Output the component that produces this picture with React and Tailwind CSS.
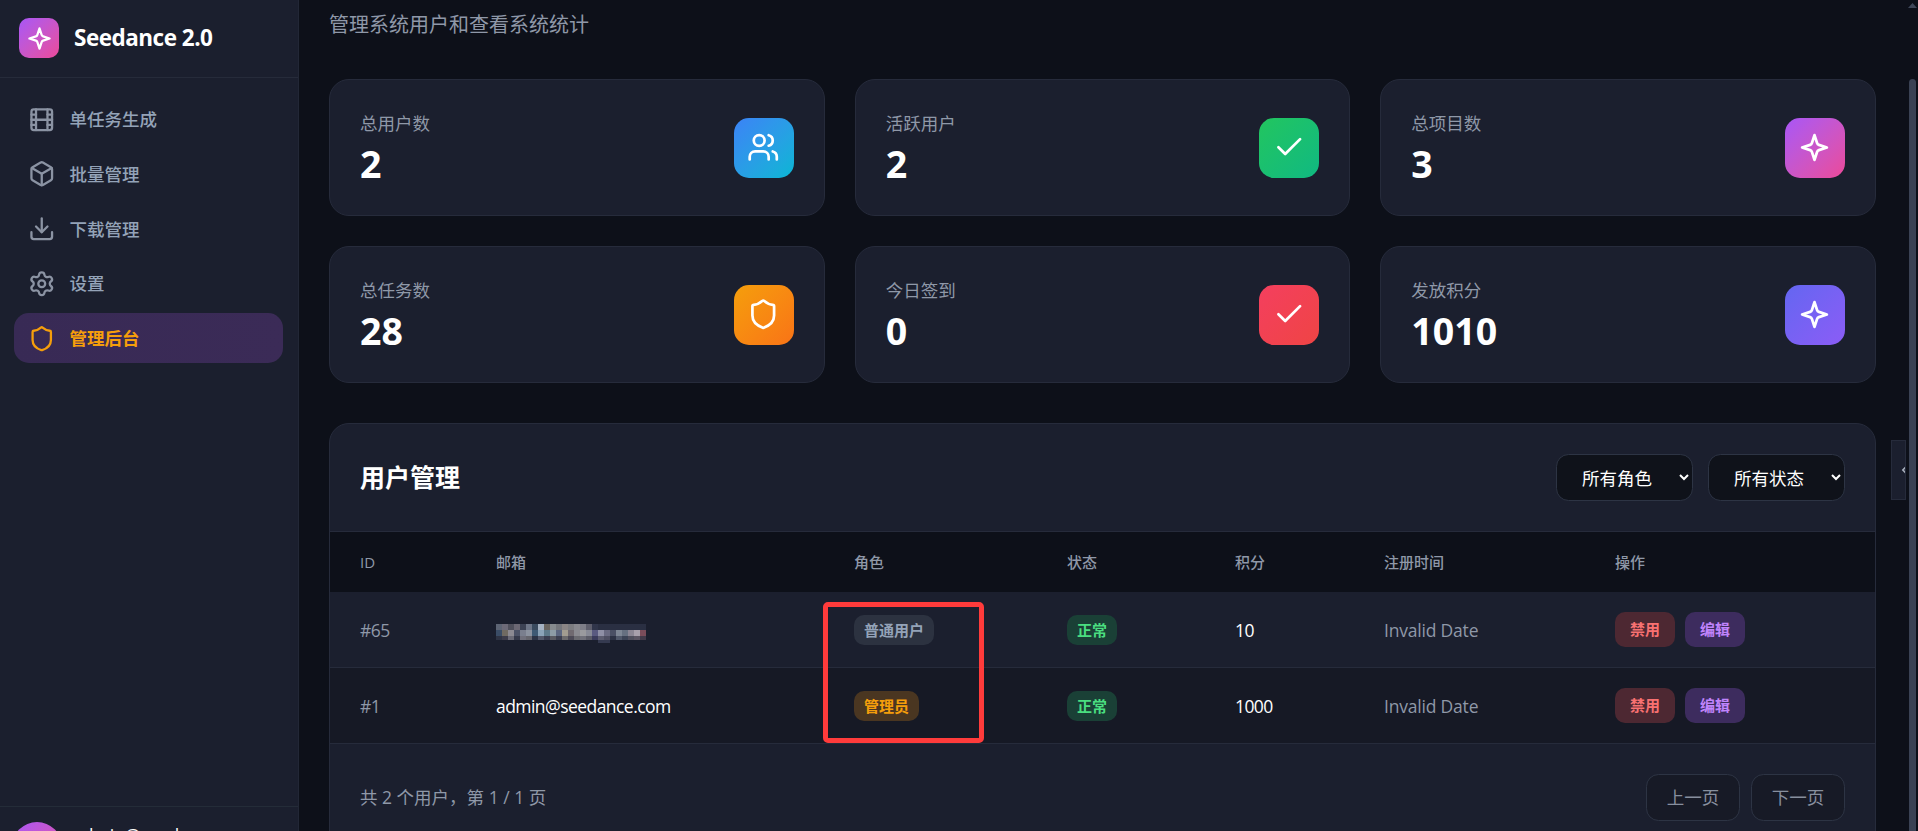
import { Box, Check, Download, Film, Settings, Shield, Users, ChevronLeft } from 'lucide-react';

function Sparkle({ size = 26 }) {
  return (
    <svg width={size} height={size} viewBox="0 0 24 24" fill="none" stroke="currentColor" strokeWidth="2" strokeLinecap="round" strokeLinejoin="round">
      <path d="M12 3l1.9 5.8a2 2 0 0 0 1.3 1.3L21 12l-5.8 1.9a2 2 0 0 0-1.3 1.3L12 21l-1.9-5.8a2 2 0 0 0-1.3-1.3L3 12l5.8-1.9a2 2 0 0 0 1.3-1.3L12 3z" />
    </svg>
  );
}

const navItems = [
  { label: '单任务生成', icon: Film },
  { label: '批量管理', icon: Box },
  { label: '下载管理', icon: Download },
  { label: '设置', icon: Settings },
];

const stats = [
  { label: '总用户数', value: '2', icon: <Users size={32.5} />, bg: 'from-[#3b82f6] to-[#06b6d4]' },
  { label: '活跃用户', value: '2', icon: <Check size={32.5} />, bg: 'from-[#22c55e] to-[#10b981]' },
  { label: '总项目数', value: '3', icon: <Sparkle size={33} />, bg: 'from-[#a855f7] to-[#ec4899]' },
  { label: '总任务数', value: '28', icon: <Shield size={32.5} />, bg: 'from-[#f59e0b] to-[#f97316]' },
  { label: '今日签到', value: '0', icon: <Check size={32.5} />, bg: 'from-[#f43f5e] to-[#ef4444]' },
  { label: '发放积分', value: '1010', icon: <Sparkle size={33} />, bg: 'from-[#6366f1] to-[#8b5cf6]' },
];

// pixelated email in row 1
const mosaic = [
  ['#5d6474', '#6d6a78', '#50505c', '#6c6874', '#3c4254', '#6e7688', '#3a4a5e', '#a6b2c2', '#6a6560', '#868a8e', '#74767c', '#8a8585', '#7c7c80', '#88888e', '#7e7e88', '#5e5e6c', '#30354a', '#2a2f42', '#2a2f42', '#2a2f42', '#2a2f42', '#2a2f42', '#2a2f42', '#2a2f42', '#2a2f42'],
  ['#3a4c66', '#6f6a62', '#8c8a92', '#4c5266', '#7a7f8e', '#8c93a0', '#3e5a74', '#8ba4b8', '#5e7a8a', '#8e9ca6', '#5c6680', '#a29c90', '#706a70', '#8a8a90', '#9a9a9e', '#888a96', '#5a5a80', '#8f8fa6', '#6a6a82', '#4a5064', '#7d8694', '#667080', '#8b8694', '#a8a0ac', '#7a4c5a'],
  ['#2e3344', '#3c3c4a', '#6a6a76', '#35394a', '#70707c', '#66666e', '#2c3446', '#52586a', '#3a3e50', '#5a5a62', '#3c3f50', '#6c6a6c', '#4c4a56', '#6a6a70', '#70707a', '#5c5c68', '#3c3c5c', '#5c5c70', '#4e4e62', '#2c3244', '#50586a', '#3c4456', '#50505e', '#5c5664', '#423a4a'],
];

function Mosaic() {
  return (
    <svg width="150" height="20" viewBox="0 0 150 20" className="mt-[8px] block" shapeRendering="crispEdges">
      {mosaic.map((row, r) =>
        row.map((c, i) => <rect key={r + '-' + i} x={i * 6} y={r * 6} width="6" height={r === 2 ? 4 : 6} fill={c} />)
      )}
      <rect x="102" y="16" width="6" height="3" fill="#353a50" />
      <rect x="108" y="16" width="6" height="3" fill="#353a50" />
    </svg>
  );
}

const rows = [
  { id: '#65', email: null, role: '普通用户', roleCls: 'bg-[#2c3240] text-[#94a3b8]', points: '10', bg: 'h-[75px] bg-[#1b1f2e]' },
  { id: '#1', email: 'admin@seedance.com', role: '管理员', roleCls: 'bg-[#4a3621] text-[#f59e0b]', points: '1000', bg: 'h-[76px] bg-[#161925]' },
];

export default function App() {
  return (
    <div className="flex h-screen w-full overflow-hidden bg-[#0d1019] font-['Open_Sans','Noto_Sans_CJK_SC',sans-serif] text-[17.5px] text-white">
      <aside className="flex h-full w-[299px] shrink-0 flex-col border-r border-[#222736] bg-[#1b1f2e]">
        <div className="flex h-[78px] shrink-0 items-center gap-[15px] border-b border-[#262b3a] pl-[19px] pb-[1px]">
          <div className="flex h-[40px] w-[40px] items-center justify-center rounded-[10px] bg-gradient-to-br from-[#a855f7] to-[#ec4899]">
            <Sparkle size={27} />
          </div>
          <span className="text-[22.5px] font-bold leading-none tracking-[-0.5px]">Seedance 2.0</span>
        </div>
        <nav className="flex flex-1 flex-col gap-[4.75px] pt-[16.25px] pr-[15px] pl-[14px]">
          {navItems.map((item) => {
            const Icon = item.icon;
            return (
              <div key={item.label} className="flex h-[50px] items-center gap-[14px] pl-[14px] font-medium text-[#94a3b8]">
                <Icon size={27.5} className="text-[#8b93a3]" />
                <span>{item.label}</span>
              </div>
            );
          })}
          <div className="flex h-[50px] items-center gap-[14px] rounded-[15px] bg-gradient-to-r from-[#382a55] to-[#3b2b57] pl-[14px] font-semibold text-[#f59e0b]">
            <Shield size={27.5} />
            <span>管理后台</span>
          </div>
        </nav>
        <div className="flex h-[25px] shrink-0 gap-[11px] overflow-hidden border-t border-[#242c38] pt-[15px] pl-[12px]">
          <div className="h-[50px] w-[50px] shrink-0 rounded-full bg-gradient-to-br from-[#a855f7] to-[#ec4899]" />
          <span className="font-medium leading-[26px]">admin@seedance.com</span>
        </div>
      </aside>

      <main className="relative h-full flex-1 overflow-hidden pr-[42px] pl-[30px]">
        <p className="h-[79px] pt-[10px] text-[20px] leading-[30px] text-[#8f98a8]">管理系统用户和查看系统统计</p>

        <div className="grid grid-cols-3 gap-[30px]">
          {stats.map((s) => (
            <div key={s.label} className="flex h-[137px] items-center justify-between rounded-[20px] border border-[#262b3b] bg-[#1b1f2e] px-[30px]">
              <div>
                <div className="leading-[26px] text-[#8f98a8]">{s.label}</div>
                <div className="mt-[5px] text-[37.5px] font-bold leading-[45px]">{s.value}</div>
              </div>
              <div className={'flex h-[60px] w-[60px] items-center justify-center rounded-[15px] bg-gradient-to-br ' + s.bg}>
                {s.icon}
              </div>
            </div>
          ))}
        </div>

        <section className="mt-[40px] overflow-hidden rounded-[20px] border border-[#262b3b] bg-[#1b1f2e]">
          <div className="flex h-[108px] items-center justify-between border-b border-[#262b3b] px-[30px]">
            <h2 className="text-[25px] font-bold">用户管理</h2>
            <div className="flex gap-[15px]">
              <select className="h-[47px] w-[137px] rounded-[12.5px] border border-[#2d3444] bg-[#0f121a] pl-[21px] text-[17.5px] text-white">
                <option>所有角色</option>
              </select>
              <select className="h-[47px] w-[137px] rounded-[12.5px] border border-[#2d3444] bg-[#0f121a] pl-[21px] text-[17.5px] text-white">
                <option>所有状态</option>
              </select>
            </div>
          </div>

          <table className="w-full table-fixed border-collapse text-left">
            <thead>
              <tr className="h-[60px] bg-[#0d1019] text-[15px] font-medium text-[#8f98a8]">
                <th className="w-[136px] pl-[30px] font-medium">ID</th>
                <th className="w-[358px] pl-[30px] font-medium">邮箱</th>
                <th className="w-[213px] pl-[30px] font-medium">角色</th>
                <th className="w-[168px] pl-[30px] font-medium">状态</th>
                <th className="w-[149px] pl-[30px] font-medium">积分</th>
                <th className="w-[231px] pl-[30px] font-medium">注册时间</th>
                <th className="pl-[30px] font-medium">操作</th>
              </tr>
            </thead>
            <tbody>
              {rows.map((r) => (
                <tr key={r.id} className={'border-b border-[#262b3b] ' + r.bg}>
                  <td className="pt-[2px] pl-[30px] tracking-[-0.5px] text-[#8f98a8]">{r.id}</td>
                  <td className="pt-[2px] pl-[30px] tracking-[-0.55px]">{r.email || <Mosaic />}</td>
                  <td className="pt-[2px] pl-[30px]">
                    <span className={'inline-block h-[30px] rounded-[10px] px-[10px] text-[15px] font-semibold leading-[30px] ' + r.roleCls}>{r.role}</span>
                  </td>
                  <td className="pt-[2px] pl-[30px]">
                    <span className="inline-block h-[30px] rounded-[10px] bg-[#1a4036] px-[10px] text-[15px] font-semibold leading-[30px] text-[#4ade80]">正常</span>
                  </td>
                  <td className="pt-[2px] pl-[30px] tracking-[-0.6px]">{r.points}</td>
                  <td className="pt-[2px] pl-[30px] tracking-[-0.2px] text-[#8f98a8]">Invalid Date</td>
                  <td className="pt-[2px] pl-[30px]">
                    <div className="-mt-[2px] flex gap-[10px]">
                      <button className="h-[35px] w-[60px] rounded-[10px] bg-[#4d2832] text-[15px] font-semibold text-[#f87171]">禁用</button>
                      <button className="h-[35px] w-[60px] rounded-[10px] bg-[#3d2c5e] text-[15px] font-semibold text-[#c084fc]">编辑</button>
                    </div>
                  </td>
                </tr>
              ))}
            </tbody>
          </table>

          <div className="flex items-center justify-between px-[30px] pt-[30px] pb-[30px]">
            <span className="text-[#8f98a8]">共 2 个用户，第 1 / 1 页</span>
            <div className="flex gap-[11px]">
              <button className="h-[47px] w-[94px] rounded-[12.5px] border border-[#2d3444] bg-[#171a26] text-[#878f9e]">上一页</button>
              <button className="h-[47px] w-[94px] rounded-[12.5px] border border-[#2d3444] bg-[#171a26] text-[#878f9e]">下一页</button>
            </div>
          </div>
        </section>

        {/* red annotation box from the screenshot */}
        <div className="absolute top-[602px] left-[524px] h-[141px] w-[161px] rounded-[5px] border-[5px] border-[#ff3b3b]" />

        {/* sidebar collapse handle */}
        <div className="absolute top-[440px] left-[1592px] flex h-[60px] w-[15px] items-center justify-end overflow-hidden border border-[#262b3b] bg-[#1b1f2e] text-[#a6adba]">
          <ChevronLeft size={10} strokeWidth={4} className="-mr-[4px] shrink-0" />
        </div>

        {/* scrollbar */}
        <svg className="absolute top-[3px] left-[1609px]" width="9" height="5" viewBox="0 0 9 5">
          <polygon points="4.5,0 9,5 0,5" fill="#3f4759" />
        </svg>
        <div className="absolute top-[79px] bottom-0 left-[1610px] w-[7px] rounded-t-[4px] bg-[#3a4254]" />
      </main>
    </div>
  );
}
